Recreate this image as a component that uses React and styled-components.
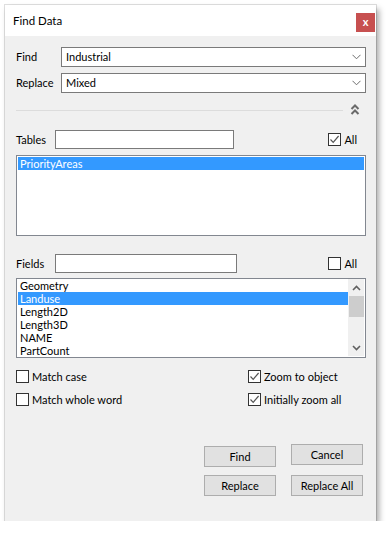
import React from "react";
import styled, { createGlobalStyle } from "styled-components";

const Global = createGlobalStyle`
  html, body { margin: 0; padding: 0; background: #ffffff; }
  body { font-family: Lato, "Open Sans", sans-serif; font-size: 11px; color: #000; line-height: 14px; }
  * { box-sizing: border-box; }
`;

const Window = styled.div`
  margin: 5px 0 0 5px;
  width: 371px;
  height: 516px;
  background: #f0f0f0;
  box-shadow: 0 0 0 1px rgba(0,0,0,0.12), 3px 4px 6px rgba(0,0,0,0.35);
  display: flex;
  flex-direction: column;
`;

const TitleBar = styled.div`
  height: 31px;
  background: #ffffff;
  display: flex;
  align-items: flex-start;
  justify-content: space-between;
  padding-left: 8px;
`;

const Title = styled.span`
  font-size: 11.5px;
  margin-top: 9px;
`;

const CloseBtn = styled.div`
  width: 19px;
  height: 19px;
  margin-top: 8px;
  margin-right: 1px;
  background: #c75050;
  color: #fff;
  font-size: 11px;
  font-weight: 700;
  display: flex;
  align-items: center;
  justify-content: center;
  line-height: 1;
  padding-bottom: 2px;
`;

const Body = styled.div`
  flex: 1;
  display: flex;
  flex-direction: column;
  padding: 11px 10px 0 11px;
`;

const FormRow = styled.div`
  display: flex;
  align-items: center;
  margin-top: ${p => p.$mt || 0}px;
`;

const Label = styled.span`
  width: ${p => p.$w}px;
  flex: none;
`;

const Combo = styled.div`
  flex: 1;
  height: 20px;
  background: #fff;
  border: 1px solid #7a7a7a;
  display: flex;
  align-items: center;
  justify-content: space-between;
  padding: 0 4px 0 4px;
`;

const TextInput = styled.div`
  width: ${p => p.$w}px;
  height: 19px;
  background: #fff;
  border: 1px solid #7a7a7a;
`;

const SepRow = styled.div`
  display: flex;
  align-items: center;
  margin-top: 11px;
  height: 12px;
`;

const SepLine = styled.div`
  width: 327px;
  height: 1px;
  background: #dcdcdc;
`;

const Spacer = styled.div`
  flex: 1;
`;

const EndGap = styled.div`
  width: 9px;
  flex: none;
`;

const CheckWrap = styled.label`
  display: flex;
  align-items: center;
  gap: 3px;
  height: 13px;
`;

const Box = styled.span`
  width: 13px;
  height: 13px;
  border: 1px solid #333;
  background: #fff;
  display: flex;
  align-items: center;
  justify-content: center;
  flex: none;
`;

const List = styled.div`
  height: ${p => p.$h}px;
  margin-top: ${p => p.$mt}px;
  background: #fff;
  border: 1px solid #828790;
  display: flex;
  padding: ${p => p.$pt}px 1px 0 1px;
`;

const ListItems = styled.div`
  flex: 1;
  display: flex;
  flex-direction: column;
  overflow: hidden;
`;

const Item = styled.div`
  height: 13px;
  line-height: 13px;
  flex: none;
  padding-left: 2px;
  background: ${p => (p.$sel ? "#3399ff" : "transparent")};
  color: ${p => (p.$sel ? "#fff" : "#000")};
  white-space: nowrap;
`;

const ScrollBar = styled.div`
  width: 16px;
  margin-bottom: 1px;
  background: #f0f0f0;
  display: flex;
  flex-direction: column;
  align-items: center;
`;

const ScrollArrow = styled.div`
  height: 17px;
  width: 100%;
  display: flex;
  align-items: center;
  justify-content: center;
`;

const Thumb = styled.div`
  width: 15px;
  height: 21px;
  background: #cdcdcd;
`;

const Options = styled.div`
  display: grid;
  grid-template-columns: 232px 1fr;
  row-gap: 10px;
  margin-top: 12px;
`;

const ButtonGrid = styled.div`
  display: grid;
  grid-template-columns: 72px 72px;
  column-gap: 15px;
  row-gap: 10px;
  justify-content: end;
  margin-top: 38px;
  margin-right: 3px;
`;

const Button = styled.div`
  height: 21px;
  background: #e1e1e1;
  border: 1px solid #adadad;
  display: flex;
  align-items: center;
  justify-content: center;
  margin-top: ${p => p.$mt || 0}px;
  margin-bottom: ${p => p.$mb || 0}px;
`;

const Chevron = () => (
  <svg width="9" height="6" viewBox="0 0 9 6">
    <path d="M0.5 0.8 L4.5 4.8 L8.5 0.8" fill="none" stroke="#6d6d6d" strokeWidth="1" />
  </svg>
);

const Check = () => (
  <svg width="11" height="11" viewBox="0 0 11 11">
    <path d="M1.5 5.5 L4.2 8.3 L9.6 2" fill="none" stroke="#555" strokeWidth="1.2" />
  </svg>
);

const CheckBox = ({ checked, children }) => (
  <CheckWrap>
    <Box>{checked && <Check />}</Box>
    <span>{children}</span>
  </CheckWrap>
);

const DoubleUp = () => (
  <svg width="10" height="12" viewBox="0 0 10 12">
    <path d="M1.5 5 L5 1.5 L8.5 5" fill="none" stroke="#6a6a6a" strokeWidth="2" />
    <path d="M1.5 10 L5 6.5 L8.5 10" fill="none" stroke="#6a6a6a" strokeWidth="2" />
  </svg>
);

const ArrowUp = () => (
  <svg width="9" height="6" viewBox="0 0 9 6">
    <path d="M1 5 L4.5 1.5 L8 5" fill="none" stroke="#606060" strokeWidth="1.6" />
  </svg>
);
const ArrowDown = () => (
  <svg width="9" height="6" viewBox="0 0 9 6">
    <path d="M1 1 L4.5 4.5 L8 1" fill="none" stroke="#606060" strokeWidth="1.6" />
  </svg>
);

export default function App() {
  return (
    <>
      <Global />
      <Window>
        <TitleBar>
          <Title>Find Data</Title>
          <CloseBtn>x</CloseBtn>
        </TitleBar>
        <Body>
          <FormRow>
            <Label $w={45}>Find</Label>
            <Combo>
              <span>Industrial</span>
              <Chevron />
            </Combo>
          </FormRow>
          <FormRow $mt={6}>
            <Label $w={45}>Replace</Label>
            <Combo>
              <span>Mixed</span>
              <Chevron />
            </Combo>
          </FormRow>
          <SepRow>
            <SepLine />
            <Spacer />
            <DoubleUp />
            <Spacer />
          </SepRow>
          <FormRow $mt={14}>
            <Label $w={39}>Tables</Label>
            <TextInput $w={179} />
            <Spacer />
            <CheckBox checked>All</CheckBox>
            <EndGap />
          </FormRow>
          <List $h={81} $mt={6} $pt={1}>
            <ListItems>
              <Item $sel>PriorityAreas</Item>
            </ListItems>
          </List>
          <FormRow $mt={18}>
            <Label $w={39}>Fields</Label>
            <TextInput $w={182} />
            <Spacer />
            <CheckBox>All</CheckBox>
            <EndGap />
          </FormRow>
          <List $h={80} $mt={5} $pt={0}>
            <ListItems>
              <Item>Geometry</Item>
              <Item $sel>Landuse</Item>
              <Item>Length2D</Item>
              <Item>Length3D</Item>
              <Item>NAME</Item>
              <Item>PartCount</Item>
            </ListItems>
            <ScrollBar>
              <ScrollArrow><ArrowUp /></ScrollArrow>
              <Thumb />
              <Spacer />
              <ScrollArrow><ArrowDown /></ScrollArrow>
            </ScrollBar>
          </List>
          <Options>
            <CheckBox>Match case</CheckBox>
            <CheckBox checked>Zoom to object</CheckBox>
            <CheckBox>Match whole word</CheckBox>
            <CheckBox checked>Initially zoom all</CheckBox>
          </Options>
          <ButtonGrid>
            <Button $mt={2} $mb={-2}>Find</Button>
            <Button>Cancel</Button>
            <Button>Replace</Button>
            <Button>Replace All</Button>
          </ButtonGrid>
        </Body>
      </Window>
    </>
  );
}
